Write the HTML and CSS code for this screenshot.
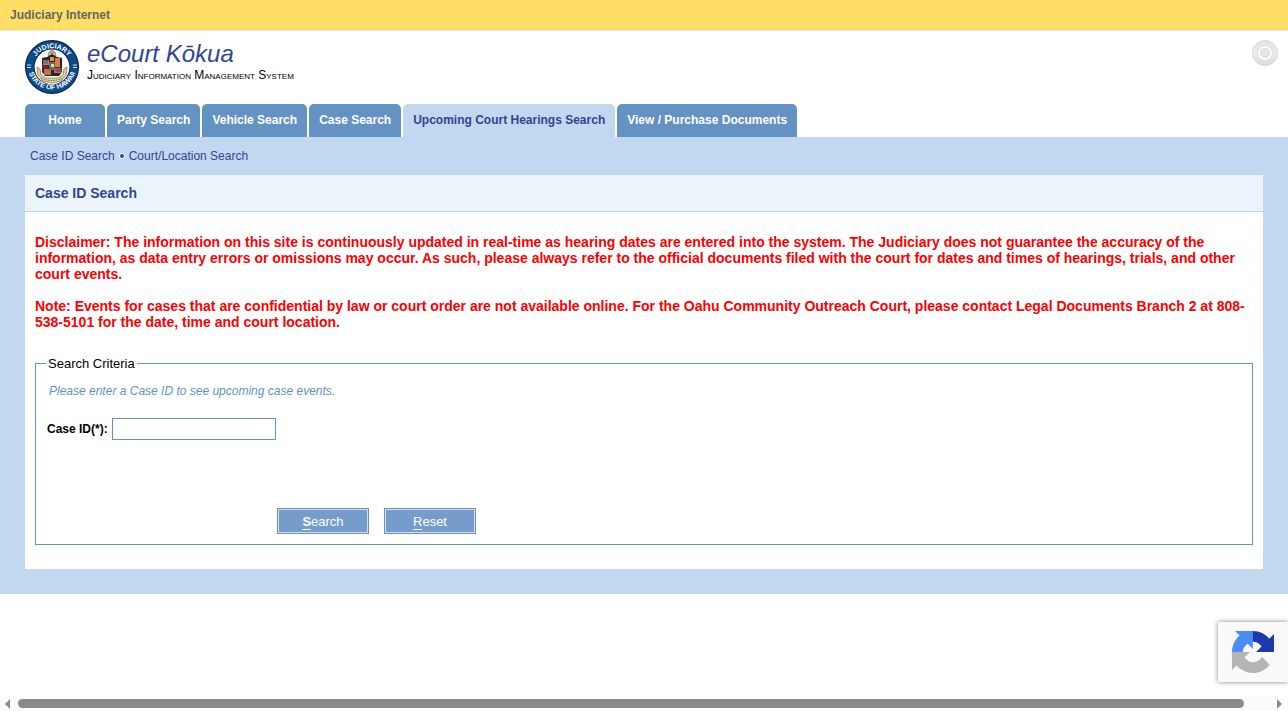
FILE: index.html
```
<!doctype html>
<html lang="en">
<head>
	<meta charset="utf-8">
	<title>eCourt Kokua - Case ID Search</title>
	<link rel="stylesheet" href="styles.css">
</head>

<body>
	<div id="topBar">Judiciary Internet</div>

	<header id="header">
		<svg id="seal" viewBox="0 0 54 54" role="img" aria-label="Judiciary, State of Hawaii">
			<defs>
				<path id="arcTop" d="M7.2 31a20 20 0 1 1 39.6 0"/>
				<path id="arcBottom" d="M2.5 25a24.5 24.5 0 1 0 49 0"/>
			</defs>
			<circle cx="27" cy="27" r="26.4" fill="#0b4c8e" stroke="#10253c" stroke-width="1.2"/>
			<circle cx="27" cy="27" r="18" fill="#fff" stroke="#152a42" stroke-width="1.2"/>
			<text class="sealText"><textPath href="#arcTop" startOffset="50%" text-anchor="middle">JUDICIARY</textPath></text>
			<text class="sealText"><textPath href="#arcBottom" startOffset="50%" text-anchor="middle">STATE OF HAWAII</textPath></text>
			<path d="M2 25h4M2 27.5h4M48 25h4M48 27.5h4" stroke="#cfdeee"/>
			<!-- crest -->
			<path d="M23 16l1-4 2-1 1-3 1 3 2 1 1 4z" fill="#dcd6b4" stroke="#807b60" stroke-width=".8"/>
			<path d="M27 9v7M24 13h6" stroke="#6f6b52" stroke-width=".7"/>
			<!-- supporters and scroll -->
			<path d="M12 27l3 2 1 6 5 3h12l5-3 1-6 3-2-1 8-5 6-9 2-9-2-5-6z" fill="#ded5a3" stroke="#817850" stroke-width=".8"/>
			<path d="M16 38q11 5 22 0" fill="none" stroke="#6a6242" stroke-dasharray="1.5 1"/>
			<!-- shield -->
			<path d="M17 18l5-1 5-3 5 3 5 1v14l-3 4H20l-3-4z" fill="#26252b"/>
			<path d="M18 20h6v5h-6zM30 18h5v9h-5z" fill="#df7a41"/>
			<path d="M19 29h7v6h-7zM29 28h7v5h-7z" fill="#d66b3c"/>
			<path d="M17 26h7M17 28h6M31 28h6M31 31h6" stroke="#8b3441"/>
			<path d="M18 21h5M18 23h5M30 30h6" stroke="#315a91"/>
			<path d="M25 17h4v4h-4z" fill="#ee8e4c"/>
			<path d="M24 22h6v8h-6z" fill="#566f91"/>
			<path d="M26 24h3v3h-3z" fill="#f1e36e"/>
		</svg>
		<div id="branding">
			<h1>eCourt Kōkua</h1>
			<p>Judiciary Information Management System</p>
		</div>
		<button type="button" id="status" aria-label="Status">
			<svg viewBox="0 0 26 26">
				<defs>
					<linearGradient id="disc" x1="0" y1="0" x2="0" y2="1">
						<stop offset="0" stop-color="#e3e3e3"/>
						<stop offset=".5" stop-color="#ececec"/>
						<stop offset="1" stop-color="#dadada"/>
					</linearGradient>
				</defs>
				<circle cx="13" cy="13" r="12.6" fill="url(#disc)" stroke="#d2d2d2" stroke-width=".8"/>
				<circle cx="13" cy="13" r="7.6" fill="#dadada"/>
				<circle cx="13" cy="13" r="6" fill="#d6d6d6" stroke="#fff" stroke-width="2"/>
				<circle cx="13" cy="13" r="4.4" fill="#e6e6e6"/>
			</svg>
		</button>
	</header>

	<nav id="tabs">
		<a href="#">Home</a>
		<a href="#">Party Search</a>
		<a href="#">Vehicle Search</a>
		<a href="#">Case Search</a>
		<a href="#" class="active">Upcoming Court Hearings Search</a>
		<a href="#">View / Purchase Documents</a>
	</nav>

	<main id="content">
		<nav id="subNav">
			<a href="#">Case ID Search</a>
			<span class="dot"></span>
			<a href="#">Court/Location Search</a>
		</nav>

		<section id="panel">
			<h2>Case ID Search</h2>
			<div id="panelBody">
				<p class="notice">Disclaimer: The information on this site is continuously updated in real-time as hearing dates are entered into the system. The Judiciary does not guarantee the accuracy of the information, as data entry errors or omissions may occur. As such, please always refer to the official documents filed with the court for dates and times of hearings, trials, and other court events.</p>
				<p class="notice">Note: Events for cases that are confidential by law or court order are not available online. For the Oahu Community Outreach Court, please contact Legal Documents Branch 2 at 808-538-5101 for the date, time and court location.</p>

				<form>
					<fieldset>
						<legend>Search Criteria</legend>
						<p class="hint">Please enter a Case ID to see upcoming case events.</p>
						<div class="field">
							<label for="caseId">Case ID(*):</label>
							<input type="text" id="caseId">
						</div>
						<div class="buttons">
							<button type="button" accesskey="s"><b class="key">S</b>earch</button>
							<button type="reset" accesskey="r"><span class="key">R</span>eset</button>
						</div>
					</fieldset>
				</form>
			</div>
		</section>
	</main>

	<!-- fixed to the window edge -->
	<div id="captcha">
		<svg viewBox="0 0 64 64" role="img" aria-label="reCAPTCHA">
			<path d="M64 31.955l-.033-1.37V4.687l-7.16 7.16C50.948 4.674 42.033.093 32.05.093c-10.4 0-19.622 4.96-25.458 12.64l11.736 11.86a15.55 15.55 0 0 1 4.754-5.334c2.05-1.6 4.952-2.906 8.968-2.906.485 0 .86.057 1.135.163 4.976.393 9.288 3.14 11.828 7.124l-8.307 8.307L64 31.953" fill="#1c3aa9"/>
			<path d="M31.862.094l-1.37.033H4.594l7.16 7.16C4.58 13.147 0 22.06 0 32.046c0 10.4 4.96 19.622 12.64 25.458L24.5 45.768a15.55 15.55 0 0 1-5.334-4.754c-1.6-2.05-2.906-4.952-2.906-8.968 0-.485.057-.86.163-1.135.393-4.976 3.14-9.288 7.124-11.828l8.307 8.307L31.86.095" fill="#4a8df8"/>
			<path d="M.001 32.045l.033 1.37v25.898l7.16-7.16c5.86 7.173 14.774 11.754 24.76 11.754 10.4 0 19.622-4.96 25.458-12.64l-11.736-11.86a15.55 15.55 0 0 1-4.754 5.334c-2.05 1.6-4.952 2.906-8.968 2.906-.485 0-.86-.057-1.135-.163-4.976-.393-9.288-3.14-11.828-7.124l8.307-8.307c-10.522.04-22.4.066-27.295-.005" fill="#b5b5b5"/>
		</svg>
	</div>

	<div id="scroller">
		<svg viewBox="0 0 5 10"><path d="M5 0v10L0 5z" fill="#8b8b8b"/></svg>
		<div id="track"><div id="thumb"></div></div>
		<svg viewBox="0 0 5 10"><path d="M0 0v10l5-5z" fill="#8b8b8b"/></svg>
	</div>
</body>
</html>
```

FILE: styles.css
```
* {
	margin: 0;
	padding: 0;
	box-sizing: border-box;
}

body {
	font-family: "Liberation Sans", Arial, Helvetica, sans-serif;
	font-size: 12px;
	line-height: 14px;
	color: #000;
	background-color: #fff;
}
a {
	color: #2e4691;
	text-decoration: none;
}

#topBar {
	padding: 8px 10px;
	border-bottom: 1px solid #e8e8e0;
	background-color: #ffde65;
	color: #666;
	font-weight: bold;
}

/* header */
#header {
	display: flex;
	align-items: flex-start;
	padding: 9px 10px 10px 25px;
}
#seal {
	width: 54px;
	height: 54px;
	margin-right: 8px;
}
.sealText {
	font-size: 7px;
	font-weight: bold;
	fill: #fff;
}
#branding {
	flex: 1;
}
#branding h1 {
	font-size: 24px;
	line-height: 28px;
	font-weight: normal;
	font-style: italic;
	color: #2e4691;
}
#branding p {
	font-variant: small-caps;
}
#status {
	width: 26px;
	height: 26px;
	border: 0;
	background: none;
	cursor: pointer;
}
#status svg {
	display: block;
}

/* tabs */
#tabs {
	display: flex;
	gap: 2px;
	padding-left: 25px;
}
#tabs a {
	min-width: 80px;
	padding: 9px 10px 10px;
	border-radius: 5px 5px 0 0;
	background-color: #6392c3;
	color: #fff;
	font-weight: bold;
	text-align: center;
}
#tabs a.active {
	background-color: #c2d8f0;
	color: #2e4691;
}

#content {
	padding: 12px 25px 25px;
	background-color: #c2d8f0;
}
#subNav {
	display: flex;
	align-items: center;
	gap: 4px;
	padding: 0 5px 12px;
}
.dot {
	width: 6px;
	height: 6px;
	border: 1px solid #fff;
	border-radius: 50%;
	background-color: #2e4691;
}

/* main panel */
#panel {
	background-color: #fff;
}
#panel h2 {
	padding: 10px;
	border-bottom: 1px solid #c2d8f0;
	background-color: #ebf3fb;
	color: #2e4691;
	font-size: 14px;
	line-height: 16px;
}
#panelBody {
	padding: 22px 10px 24px;
}
.notice {
	margin-bottom: 16px;
	color: #f00;
	font-size: 14px;
	line-height: 16px;
	font-weight: bold;
}

fieldset {
	margin-top: 26px;
	padding: 13px 10px 10px;
	border: 1px solid #6392c3;
}
legend {
	padding: 0 2px;
	font-size: 13px;
	line-height: 15px;
}
.hint {
	padding-left: 3px;
	color: #6392c3;
	font-style: italic;
}
.field {
	display: flex;
	align-items: center;
	gap: 4px;
	margin-top: 20px;
	padding-left: 1px;
}
.field label {
	font-weight: bold;
}
.field input {
	width: 164px;
	height: 22px;
	padding: 0 3px;
	border: 1px solid #6392c3;
	font: inherit;
}
.buttons {
	display: flex;
	gap: 15px;
	margin-top: 68px;
	padding-left: 231px;
}
.buttons button {
	width: 92px;
	height: 26px;
	padding-top: 2px;
	border: 1px solid #6392c3;
	box-shadow: inset 0 0 0 1px #ddd;
	background-color: #769ccb;
	color: #fff;
	font-family: inherit;
	font-size: 13px;
	line-height: 14px;
	cursor: pointer;
}
.key {
	display: inline-block;
	border-bottom: 1px solid #fff;
}

/* captcha badge */
#captcha {
	position: fixed;
	right: 0;
	bottom: 29px;
	width: 70px;
	height: 60px;
	padding: 9px 14px;
	border-radius: 2px 0 0 2px;
	background-color: #f9f9f9;
	box-shadow: 0 0 5px #808080;
}
#captcha svg {
	display: block;
	width: 42px;
	height: 42px;
}

#scroller {
	position: fixed;
	left: 0;
	right: 0;
	bottom: 0;
	display: flex;
	align-items: center;
	gap: 8px;
	height: 15px;
	padding: 0 6px 0 5px;
	background-color: #fcfcfc;
}
#scroller svg {
	width: 5px;
	height: 10px;
}
#track {
	flex: 1;
}
#thumb {
	width: 98%;
	height: 9px;
	border-radius: 5px;
	background-color: #8b8b8b;
}
```
